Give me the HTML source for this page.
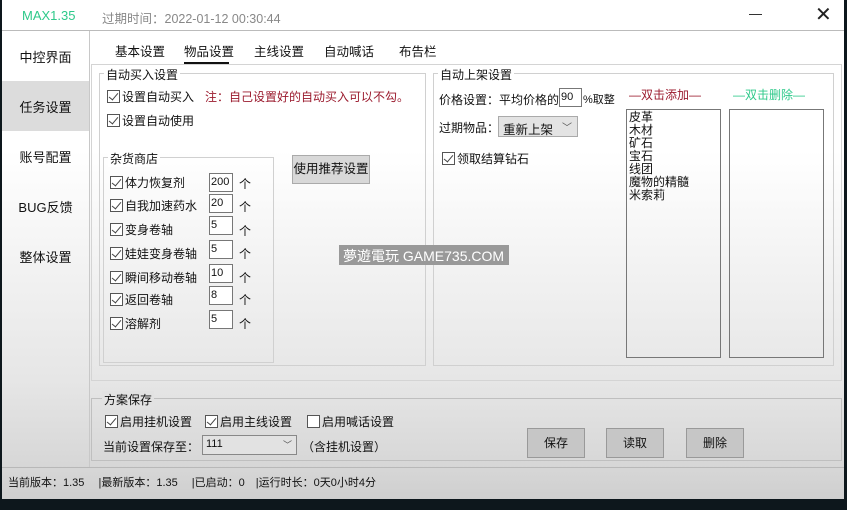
<!DOCTYPE html>
<html><head><meta charset="utf-8"><style>
*{box-sizing:border-box;margin:0;padding:0}
body{width:847px;height:510px;overflow:hidden;background:#0d171c;font-family:"Liberation Sans","Noto Sans CJK SC",sans-serif;font-size:12px;color:#111;position:relative}
#win{position:absolute;left:2px;top:0;width:842px;height:499px;background:linear-gradient(#fff 0,#fff 150px,#e6e6e6 380px,#d6d6d6 470px,#cfcfcf 499px);overflow:hidden}
.a{position:absolute;white-space:nowrap}
.g{position:absolute;border:1px solid #d0d0d0}
.lg{position:absolute;background:inherit;padding:0 2px;font-size:12px;top:-9px;left:8px;background:#fff}
.cb{display:inline-block;width:13px;height:13px;border:1px solid #555;background:#fff;vertical-align:-2px;margin-right:2px;position:relative}
.cb.c::after{content:"";position:absolute;left:3px;top:0px;width:4px;height:8px;border:solid #444;border-width:0 1.5px 1.5px 0;transform:rotate(40deg)}
.inp{position:absolute;border:1px solid #777;background:#fff;height:19px;width:24px;font-size:11px;padding:2px 1px}
.btn{position:absolute;background:#d8d8d8;border:1px solid #aaa;text-align:center}
.side{position:absolute;left:0;width:87px;text-align:center;font-size:13px}
</style></head><body>
<div id="win">
<div class="a" style="left:20px;top:8px;color:#2ec98a;font-size:13px">MAX1.35</div>
<div class="a" style="left:100px;top:8px;color:#888;font-size:12.5px">过期时间：2022-01-12 00:30:44</div>
<div class="a" style="left:747px;top:14px;width:13px;height:1px;background:#333"></div>
<div class="a" style="left:813px;top:2px;font-size:20px;color:#222">✕</div>
<div class="a" style="left:0;top:30px;width:842px;height:1px;background:#bbb"></div>
<div class="a" style="left:87px;top:31px;width:1px;height:437px;background:#c8c8c8"></div>
<div class="side" style="top:47px">中控界面</div>
<div class="a" style="left:0;top:81px;width:87px;height:50px;background:#dcdcdc"></div>
<div class="side" style="top:97px">任务设置</div>
<div class="side" style="top:147px">账号配置</div>
<div class="side" style="top:197px">BUG反馈</div>
<div class="side" style="top:247px">整体设置</div>

<div class="a" style="left:113px;top:41px;font-size:12.5px">基本设置</div>
<div class="a" style="left:182px;top:41px;font-size:12.5px">物品设置</div>
<div class="a" style="left:182px;top:62px;width:45px;height:3px;background:#111"></div>
<div class="a" style="left:252px;top:41px;font-size:12.5px">主线设置</div>
<div class="a" style="left:322px;top:41px;font-size:12.5px">自动喊话</div>
<div class="a" style="left:397px;top:41px;font-size:12.5px">布告栏</div>
<div class="g" style="left:89px;top:64px;width:751px;height:317px;border-color:#d4d4d4"></div>

<div class="g" style="left:97px;top:73px;width:327px;height:293px"><span class="lg" style="left:4px;top:-8px">自动买入设置</span></div>
<div class="a" style="left:105px;top:88px"><span class="cb c"></span>设置自动买入</div>
<div class="a" style="left:203px;top:88px;color:#9b1b2e">注：自己设置好的自动买入可以不勾。</div>
<div class="a" style="left:105px;top:112px"><span class="cb c"></span>设置自动使用</div>
<div class="g" style="left:101px;top:157px;width:171px;height:206px"><span class="lg" style="left:4px;top:-8px">杂货商店</span></div>
<div class="a" style="left:108px;top:174px"><span class="cb c"></span>体力恢复剂</div>
<div class="a" style="left:108px;top:197px"><span class="cb c"></span>自我加速药水</div>
<div class="a" style="left:108px;top:221px"><span class="cb c"></span>变身卷轴</div>
<div class="a" style="left:108px;top:245px"><span class="cb c"></span>娃娃变身卷轴</div>
<div class="a" style="left:108px;top:269px"><span class="cb c"></span>瞬间移动卷轴</div>
<div class="a" style="left:108px;top:291px"><span class="cb c"></span>返回卷轴</div>
<div class="a" style="left:108px;top:315px"><span class="cb c"></span>溶解剂</div>
<div class="inp" style="left:207px;top:173px">200</div><div class="a" style="left:237px;top:175px">个</div>
<div class="inp" style="left:207px;top:194px">20</div><div class="a" style="left:237px;top:198px">个</div>
<div class="inp" style="left:207px;top:216px">5</div><div class="a" style="left:237px;top:222px">个</div>
<div class="inp" style="left:207px;top:240px">5</div><div class="a" style="left:237px;top:245px">个</div>
<div class="inp" style="left:207px;top:264px">10</div><div class="a" style="left:237px;top:269px">个</div>
<div class="inp" style="left:207px;top:286px">8</div><div class="a" style="left:237px;top:291px">个</div>
<div class="inp" style="left:207px;top:310px">5</div><div class="a" style="left:237px;top:315px">个</div>
<div class="btn" style="left:290px;top:155px;width:78px;height:29px;line-height:27px;font-size:12.5px">使用推荐设置</div>

<div class="g" style="left:431px;top:73px;width:401px;height:293px"><span class="lg" style="left:4px;top:-8px">自动上架设置</span></div>
<div class="a" style="left:437px;top:91px">价格设置：平均价格的</div>
<div class="inp" style="left:557px;top:88px;width:23px">90</div>
<div class="a" style="left:581px;top:91px;font-size:11px">%取整</div>
<div class="a" style="left:437px;top:119px">过期物品：</div>
<div class="a" style="left:496px;top:116px;width:80px;height:21px;background:#e3e3e3;border:1px solid #aaa;padding:2px 4px;font-size:12.5px">重新上架<span style="position:absolute;right:5px;top:2px;font-size:10px;color:#555">﹀</span></div>
<div class="a" style="left:440px;top:150px"><span class="cb c"></span>领取结算钻石</div>
<div class="a" style="left:627px;top:86px;color:#9b1b2e">—双击添加—</div>
<div class="a" style="left:731px;top:86px;color:#2ec98a">—双击删除—</div>
<div class="a" style="left:624px;top:109px;width:95px;height:249px;border:1px solid #777;line-height:13px;padding:1px 2px;white-space:normal">皮革<br>木材<br>矿石<br>宝石<br>线团<br>魔物的精髓<br>米索莉</div>
<div class="a" style="left:727px;top:109px;width:95px;height:249px;border:1px solid #777"></div>

<div class="a" style="left:337px;top:245px;width:170px;height:20px;background:#999;color:#fff;font-size:14px;padding:1px 4px">夢遊電玩 GAME735.COM</div>

<div class="g" style="left:89px;top:398px;width:751px;height:63px;border-color:#bfbfbf"><span class="lg" style="left:10px;top:-8px;background:#e2e2e2">方案保存</span></div>
<div class="a" style="left:103px;top:413px"><span class="cb c"></span>启用挂机设置</div>
<div class="a" style="left:203px;top:413px"><span class="cb c"></span>启用主线设置</div>
<div class="a" style="left:305px;top:413px"><span class="cb"></span>启用喊话设置</div>
<div class="a" style="left:101px;top:438px">当前设置保存至：</div>
<div class="a" style="left:200px;top:435px;width:95px;height:20px;border:1px solid #888;background:#e2e2e2;padding:2px 3px;font-size:11px">111<span style="position:absolute;right:4px;top:2px;font-size:9px;color:#555">﹀</span></div>
<div class="a" style="left:300px;top:438px">（含挂机设置）</div>
<div class="btn" style="left:525px;top:428px;width:58px;height:30px;line-height:28px;background:#c6c6c6;border-color:#999">保存</div>
<div class="btn" style="left:604px;top:428px;width:58px;height:30px;line-height:28px;background:#c6c6c6;border-color:#999">读取</div>
<div class="btn" style="left:684px;top:428px;width:58px;height:30px;line-height:28px;background:#c6c6c6;border-color:#999">删除</div>

<div class="a" style="left:0;top:467px;width:842px;height:1px;background:#b8b8b8"></div>
<div class="a" style="left:6px;top:474px;font-size:11px">当前版本：1.35　 |最新版本：1.35　 |已启动：0　|运行时长：0天0小时4分</div>
</div>
</body></html>
